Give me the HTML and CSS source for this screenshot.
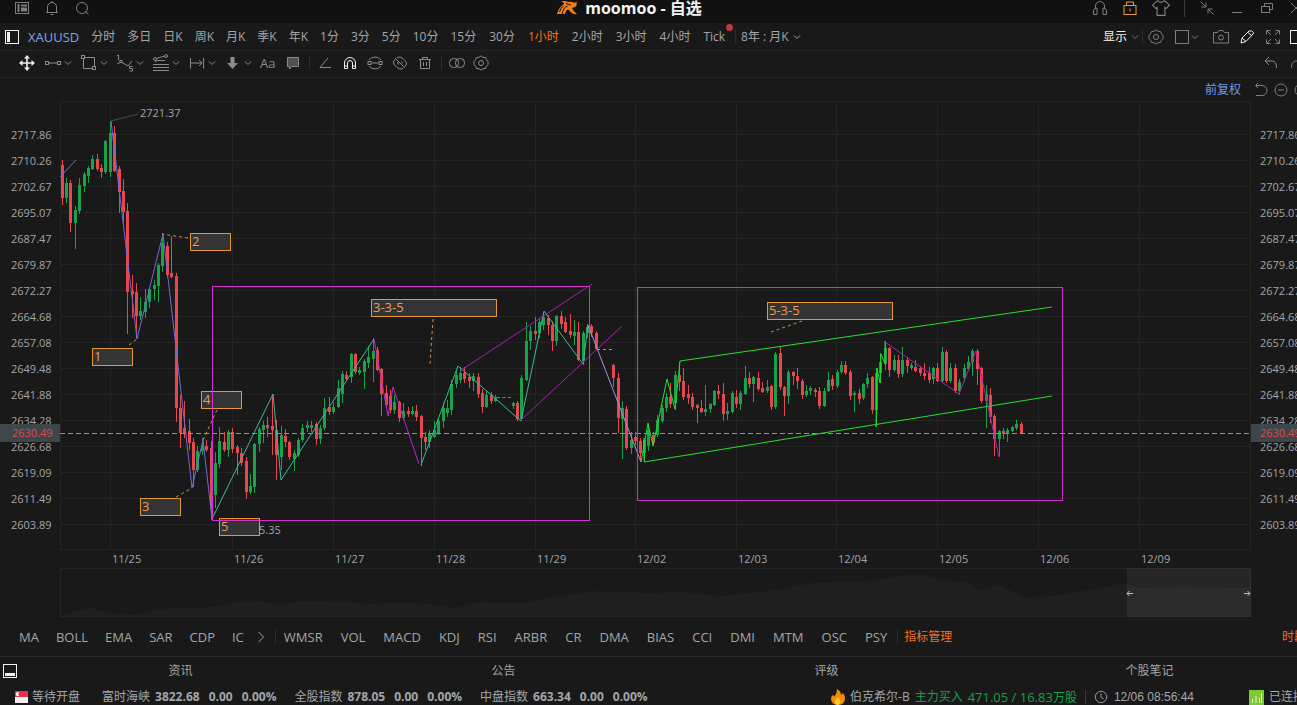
FILE: index.html
```html
<!DOCTYPE html>
<html lang="zh-CN">
<head>
<meta charset="utf-8">
<title>moomoo - 自选</title>
<link rel="stylesheet" href="styles.css">
</head>
<body>
<svg class="sprite" aria-hidden="true">
  <symbol id="chev" viewBox="0 0 8 8"><path d="M1 2.500l3 3 3-3"/></symbol>
  <symbol id="layout" viewBox="0 0 16 16"><rect x="1.500" y="2.500" width="13" height="11"/><path d="M4.500 4v8" stroke-width="2"/><path d="M7 5.500h6M7 8.500h6M7 10.500h6" stroke-width="2"/></symbol>
  <symbol id="bell" viewBox="0 0 16 16"><path d="M2 12.500h12M3.500 12V7a4.500 4.500 0 0 1 9 0v5M8 1v2M6.500 14.500h3"/></symbol>
  <symbol id="search" viewBox="0 0 16 16"><circle cx="8" cy="8" r="5.500"/><path d="M11.500 11.500l3 3"/></symbol>
  <symbol id="phones" viewBox="0 0 16 16"><path d="M3.500 8V6a4.500 4.500 0 0 1 9 0v2"/><path d="M1.500 14.500V11q0-3 3.500-3v6.500zM14.500 14.500V11q0-3-3.500-3v6.500z"/></symbol>
  <symbol id="lock" viewBox="0 0 16 16"><rect x="2" y="5.500" width="12" height="9"/><path d="M4.500 5V2h7v3M8 8.500v3"/></symbol>
  <symbol id="shirt" viewBox="0 0 16 16"><path d="M5 1.500q3 3 6 0l4.500 4-3 3-1-1v7h-7v-7l-1 1-3-3z"/></symbol>
  <symbol id="shrink" viewBox="0 0 16 16"><path d="M1.500 1.500l5 5M7 2.500v4.500H2.500M14.500 14.500l-5-5M9 13.500V9h4.500"/></symbol>
  <symbol id="mini" viewBox="0 0 16 16"><path d="M3 12.500h10"/></symbol>
  <symbol id="restore" viewBox="0 0 16 16"><path d="M5.500 6V3.500h8v6H11"/><rect x="2.500" y="6.500" width="8" height="6"/></symbol>
  <symbol id="close" viewBox="0 0 16 16"><path d="M2 3l10 10M12 3L2 13"/></symbol>
  <symbol id="side" viewBox="0 0 16 16"><rect x="1.500" y="1.500" width="13" height="13"/><path d="M4.500 3v10" stroke-width="3"/></symbol>
  <symbol id="dock" viewBox="0 0 16 16"><rect x="1.500" y="1.500" width="13" height="13"/><path d="M3 11.500h10" stroke-width="3"/></symbol>
  <symbol id="gear" viewBox="0 0 16 16"><path d="M8 .8l2 1.500 2.500.2 1 2.300L15 6.500v3l-1.500 1.700-1 2.300-2.500.2-2 1.500-2-1.500-2.500-.2-1-2.300L1 9.500v-3l1.500-1.700 1-2.300L6 2.300z"/><circle cx="8" cy="8" r="2.500"/></symbol>
  <symbol id="box" viewBox="0 0 16 16"><rect x="1.500" y="1.500" width="13" height="13"/></symbol>
  <symbol id="camera" viewBox="0 0 16 16"><path d="M.5 3.500h4l1.500-2h4l1.500 2h4v10.500H.5z"/><circle cx="8" cy="8.500" r="2.500"/></symbol>
  <symbol id="pen" viewBox="0 0 16 16"><path d="M2 14l1-5 7-7q3-1 4.500 1.500L14 5l-7 7.500zM3 9l4 3.500M9 3.500L13 7"/></symbol>
  <symbol id="expand" viewBox="0 0 16 16"><path d="M1.500 5.500v-4h4M2 2l4 4M14.500 5.500v-4h-4M14 2l-4 4M1.500 10.500v4h4M2 14l4-4M14.500 10.500v4h-4M14 14l-4-4"/></symbol>
  <symbol id="move" viewBox="0 0 18 18"><path d="M9 3v12M3 9h12" stroke-width="1.600"/><path d="M9 1l3 3.500H6zM9 17l3-3.500H6zM1 9l3.500-3v6zM17 9l-3.500-3v6z" fill="currentColor" stroke="none"/></symbol>
  <symbol id="line" viewBox="0 0 18 18"><rect x="1.500" y="7.500" width="3" height="3"/><rect x="13.500" y="7.500" width="3" height="3"/><path d="M5 9h8"/></symbol>
  <symbol id="shape" viewBox="0 0 18 18"><path d="M5 3.500h9.500V13M12 14.500H3.500V5"/><rect x="1.500" y="1.500" width="3" height="3"/><rect x="12.500" y="12.500" width="3" height="3"/></symbol>
  <symbol id="wave" viewBox="0 0 18 18"><path d="M1 2l1.500-1v5M1 10l4-2 7 4 4-5"/><rect x="4" y="6.500" width="2" height="2"/><path d="M16.500 12.500h-3v2h3v2.500h-3" /></symbol>
  <symbol id="fib" viewBox="0 0 18 18"><path d="M1 10.500h16M1 13.500h16M1 16.500h16M3 8l2-1.500h8M4.500 4.500L12.500 2"/><circle cx="3" cy="5" r="1.500"/><circle cx="14" cy="2" r="1.500"/></symbol>
  <symbol id="range" viewBox="0 0 18 18"><path d="M2.500 4v10.500M15.500 4v10.500M3 9h11M11 6l3 3-3 3"/></symbol>
  <symbol id="down" viewBox="0 0 18 18"><path d="M6.500 3h4v6h3.500l-5.500 6L3 9h3.500z" fill="currentColor" stroke="none"/></symbol>
  <symbol id="note" viewBox="0 0 18 18"><path d="M3.500 3.500h11v9H8l-2.500 2.500v-2.500h-2z" fill="#505050"/></symbol>
  <symbol id="angle" viewBox="0 0 18 18"><path d="M12 4L4 13.500h11"/></symbol>
  <symbol id="magnet" viewBox="0 0 18 18"><path d="M3.500 14.500V9a5.500 5.500 0 0 1 11 0v5.500h-3V9a2.500 2.500 0 0 0-5 0v5.500zM3.500 12h3M11.500 12h3"/></symbol>
  <symbol id="sync" viewBox="0 0 18 18"><path d="M3 6a7 6 0 0 1 12 0M3 12a7 6 0 0 0 12 0M6 9h6"/><rect x="2" y="7.500" width="3" height="3"/><rect x="13" y="7.500" width="3" height="3"/></symbol>
  <symbol id="hide" viewBox="0 0 18 18"><path d="M4 4l10 10M6 3.500Q9 2 12 4.500T15.500 9q0 2-1.500 3.500M12 14.500Q9 16 6 13.500T2.500 9q0-2 1.500-3.500M7.500 10.500a2 2 0 0 1 0-3M10.500 7.500a2 2 0 0 1 .5 2"/></symbol>
  <symbol id="trash" viewBox="0 0 18 18"><path d="M3 5.500h12M6.500 5V3.500h5V5M4.500 6v8.500h9V6M7.500 8v4M10.500 8v4"/></symbol>
  <symbol id="rings" viewBox="0 0 18 18"><rect x="1.500" y="4.500" width="9" height="9" rx="4"/><rect x="7.500" y="4.500" width="9" height="9" rx="4"/></symbol>
  <symbol id="undo" viewBox="0 0 16 16"><path d="M6 2L2 6l4 4M2.500 6H9q4.500 0 4.500 7"/></symbol>
  <symbol id="redo" viewBox="0 0 16 16"><path d="M2.500 13q0-7 4.500-7h7"/></symbol>
  <symbol id="back" viewBox="0 0 16 16"><path d="M5 1L2.500 3.500 5 6M3 3.500h6a5 5 0 0 1 0 10H3"/></symbol>
  <symbol id="minus" viewBox="0 0 16 16"><circle cx="8" cy="8" r="6"/><path d="M5 8h6"/></symbol>
  <symbol id="more" viewBox="0 0 8 14"><path d="M1.500 2l5 5-5 5"/></symbol>
  <symbol id="clock" viewBox="0 0 16 16"><circle cx="8" cy="8" r="6.500"/><path d="M8 4v4.500l3 1.500"/></symbol>
</svg>

<header class="titlebar">
  <div class="tools">
    <button aria-label="布局"><svg class="i16"><use href="#layout"/></svg></button>
    <button aria-label="通知"><svg class="i16"><use href="#bell"/></svg></button>
    <button aria-label="搜索"><svg class="i16"><use href="#search"/></svg></button>
  </div>
  <h1 class="brand">
    <svg class="logo" viewBox="0 0 20 14" aria-hidden="true"><path d="M0 13Q2 6 7 3q0-2-3-2.500Q8-1 11 1q5-1 6 1 2 0 2-2 2 4-1 6l-3 1q1 3 5 6-5 1-8-4-2-1-3 1l-1 3z" fill="#f57c12"/><path d="M5.500 13q0-6 5-8M9 2.500l5 1.500M2.500 11q1-4 4-6" stroke="#111" stroke-width="1" fill="none"/></svg>
    moomoo - 自选
  </h1>
  <div class="window-tools">
    <button aria-label="客服"><svg class="i16"><use href="#phones"/></svg></button>
    <button aria-label="锁定" class="amber"><svg class="i16"><use href="#lock"/></svg></button>
    <button aria-label="主题"><svg class="i18"><use href="#shirt"/></svg></button>
    <span class="sep"></span>
    <button aria-label="收缩"><svg class="i16"><use href="#shrink"/></svg></button>
    <button aria-label="最小化"><svg class="i16"><use href="#mini"/></svg></button>
    <button aria-label="还原"><svg class="i16"><use href="#restore"/></svg></button>
    <button aria-label="关闭" class="cut"><svg class="i16"><use href="#close"/></svg></button>
  </div>
</header>

<nav class="periods">
  <button aria-label="侧栏" class="white"><svg class="i16"><use href="#side"/></svg></button>
  <button class="symbol">XAUUSD</button>
  <div class="period-list">
    <button>分时</button><button>多日</button><button>日K</button><button>周K</button><button>月K</button><button>季K</button><button>年K</button><button>1分</button><button>3分</button><button>5分</button><button>10分</button><button>15分</button><button>30分</button><button class="on">1小时</button><button>2小时</button><button>3小时</button><button>4小时</button><button class="tick">Tick</button>
  </div>
  <span class="sep"></span>
  <button class="drop">8年 : 月K<svg class="i8"><use href="#chev"/></svg></button>
  <div class="right">
    <button class="drop white">显示<svg class="i8 dim"><use href="#chev"/></svg></button>
    <span class="sep"></span>
    <button aria-label="设置"><svg class="i16"><use href="#gear"/></svg></button>
    <button class="drop tight" aria-label="窗格"><svg class="i16"><use href="#box"/></svg><svg class="i8"><use href="#chev"/></svg></button>
    <button aria-label="截图"><svg class="i16"><use href="#camera"/></svg></button>
    <button aria-label="画线" class="white"><svg class="i16"><use href="#pen"/></svg></button>
    <button aria-label="全屏"><svg class="i16"><use href="#expand"/></svg></button>
    <button aria-label="右栏" class="cut white"><svg class="i16"><use href="#box"/></svg></button>
  </div>
</nav>

<div class="drawbar">
  <div class="group">
    <button aria-label="移动" class="white"><svg class="i18"><use href="#move"/></svg></button>
    <button class="split" aria-label="线段"><svg class="i18"><use href="#line"/></svg><svg class="i8"><use href="#chev"/></svg></button>
    <button class="split" aria-label="图形"><svg class="i18"><use href="#shape"/></svg><svg class="i8"><use href="#chev"/></svg></button>
    <button class="split" aria-label="波浪"><svg class="i18"><use href="#wave"/></svg><svg class="i8"><use href="#chev"/></svg></button>
    <button class="split" aria-label="斐波那契"><svg class="i18"><use href="#fib"/></svg><svg class="i8"><use href="#chev"/></svg></button>
    <button class="split" aria-label="区间"><svg class="i18"><use href="#range"/></svg><svg class="i8"><use href="#chev"/></svg></button>
    <button class="split" aria-label="箭头"><svg class="i18"><use href="#down"/></svg><svg class="i8"><use href="#chev"/></svg></button>
    <button class="aa">Aa</button>
    <button aria-label="注释"><svg class="i18"><use href="#note"/></svg></button>
  </div>
  <span class="sep"></span>
  <div class="group">
    <button aria-label="角度"><svg class="i18"><use href="#angle"/></svg></button>
    <button aria-label="磁铁" class="white"><svg class="i18"><use href="#magnet"/></svg></button>
    <button aria-label="同步"><svg class="i18"><use href="#sync"/></svg></button>
    <button aria-label="隐藏"><svg class="i18"><use href="#hide"/></svg></button>
    <button aria-label="删除"><svg class="i18"><use href="#trash"/></svg></button>
  </div>
  <span class="sep"></span>
  <div class="group">
    <button aria-label="对比"><svg class="i18"><use href="#rings"/></svg></button>
    <button aria-label="画线设置"><svg class="i16"><use href="#gear"/></svg></button>
  </div>
  <div class="history">
    <button aria-label="撤销"><svg class="i16"><use href="#undo"/></svg></button>
    <button aria-label="重做" class="cut dim"><svg class="i16"><use href="#redo"/></svg></button>
  </div>
</div>

<main>
  <div class="chart-head">
    <a href="#chart">前复权</a>
    <button aria-label="复位"><svg class="i16"><use href="#back"/></svg></button>
    <button aria-label="缩小"><svg class="i16"><use href="#minus"/></svg></button>
    <button aria-label="放大" class="cut"><svg class="i16"><use href="#minus"/></svg></button>
  </div>
  <section class="chart" id="chart">
    <div class="axis"></div>
    <svg class="plot" role="img" aria-label="XAUUSD 1小时 K线图"></svg>
    <div class="axis axis-right"></div>
  </section>
  <svg class="overview" role="img" aria-label="区间选择"></svg>
</main>

<nav class="indicators">
  <div class="main-set">
    <button>MA</button><button>BOLL</button><button>EMA</button><button>SAR</button><button>CDP</button><button>IC</button>
  </div>
  <button aria-label="更多"><svg class="arrow"><use href="#more"/></svg></button>
  <span class="sep"></span>
  <div class="sub-set">
    <button>WMSR</button><button>VOL</button><button>MACD</button><button>KDJ</button><button>RSI</button><button>ARBR</button><button>CR</button><button>DMA</button><button>BIAS</button><button>CCI</button><button>DMI</button><button>MTM</button><button>OSC</button><button>PSY</button>
  </div>
  <span class="sep"></span>
  <button class="manage">指标管理</button>
  <button class="zone">时段</button>
</nav>

<nav class="tabs">
  <button aria-label="底栏" class="white"><svg class="i16"><use href="#dock"/></svg></button>
  <div class="tab-list"><button>资讯</button><button>公告</button><button>评级</button><button>个股笔记</button></div>
</nav>

<footer class="status">
  <span class="market"><svg class="flag" viewBox="0 0 13 12" aria-hidden="true"><path d="M0 0h13v6H0z" fill="#e8304a"/><path d="M0 6h13v6H0z" fill="#f4f0f0"/><path d="M4 1.500a2 2 0 1 0 0 3.200 2.400 2.400 0 0 1 0-3.200z" fill="#fff"/></svg>等待开盘</span>
  <span class="quote">富时海峡 <b>3822.68</b><b>0.00</b><b>0.00%</b></span>
  <span class="quote">全股指数 <b>878.05</b><b>0.00</b><b>0.00%</b></span>
  <span class="quote">中盘指数 <b>663.34</b><b>0.00</b><b>0.00%</b></span>
  <span class="feed">
    <svg class="flame" viewBox="0 0 14 16" aria-hidden="true"><path d="M6 0q4 2 4 6l2-2q3 4 1.500 8T7 16 .5 12 2 6l1.500 1.500Q6 4 6 0z" fill="#f58a0b"/><path d="M7 8q3 3 2.500 5T7 16q-3-.5-3-3t3-5z" fill="#ffc928"/></svg>
    <span>伯克希尔-B</span>
    <span class="buy">主力买入</span>
    <span class="buy amount">471.05 / 16.83<small>万股</small></span>
  </span>
  <span class="sep"></span>
  <span class="time"><svg class="i14"><use href="#clock"/></svg><time>12/06 08:56:44</time></span>
  <span class="link"><svg class="signal" viewBox="0 0 15 15" aria-hidden="true"><path d="M0 0h15v15H0z" fill="#7ec832"/><path d="M3.500 9v4M7 6v7M10.500 8v5M12.500 3v10" stroke="#e8ffd0"/></svg>已连接</span>
</footer>
<script src="chart.js"></script>
</body>
</html>
```

FILE: styles.css
```css
* { box-sizing: border-box; }
body {
  margin: 0;
  min-height: 100vh;
  overflow: hidden;
  background: #191919;
  color: #a3a6aa;
  font: 12px/16px "Open Sans", "Noto Sans CJK SC", sans-serif;
}
button {
  display: flex;
  align-items: center;
  flex: none;
  padding: 0;
  border: 0;
  background: none;
  color: inherit;
  font: inherit;
  white-space: nowrap;
}
svg { display: block; flex: none; fill: none; stroke: currentColor; }
.sprite { position: absolute; width: 0; height: 0; }
.i8 { width: 8px; height: 8px; }
.i14 { width: 14px; height: 14px; }
.i16 { width: 16px; height: 16px; }
.i18 { width: 18px; height: 18px; }
.logo, .flag, .flame, .signal { stroke: none; }
.white { color: #f0f0f0; }
.amber { color: #f09a35; }
.dim { color: #777; }
.cut { width: 8px; overflow: hidden; }
.sep { flex: none; width: 1px; height: 14px; background: #2d2d2d; }

.titlebar {
  display: grid;
  grid-template-columns: 1fr auto 1fr;
  align-items: center;
  align-content: center;
  height: 23px;
  padding: 0 52px 8px 14px;
  background: #111;
  color: #7d7f82;
}
.tools { display: flex; gap: 14px; }
.brand {
  display: flex;
  align-items: center;
  gap: 8px;
  margin: 0;
  color: #f4f4f4;
  font-size: 16px;
  line-height: 14px;
  white-space: nowrap;
}
.logo { width: 20px; height: 14px; }
.window-tools {
  display: flex;
  align-items: center;
  justify-self: end;
  gap: 14px;
  margin-right: -52px;
}
.window-tools .sep { background: #3a3a3a; height: 18px; }

.periods {
  display: flex;
  align-items: center;
  height: 28px;
  padding-left: 4px;
  border-bottom: 1px solid #262626;
}
.symbol { margin: 0 12px 0 8px; color: #7ba5ea; font-size: 13px; }
.period-list { display: flex; gap: 12px; margin-right: 9px; }
.period-list button:nth-child(n+12) { padding-right: 1px; }
.period-list .on { color: #f5701e; }
.tick { position: relative; }
.tick::after {
  content: "";
  position: absolute;
  top: -5px;
  right: -7px;
  width: 7px;
  height: 7px;
  border-radius: 50%;
  background: #b83a42;
}
.drop { gap: 4px; margin-left: 5px; }
.right { display: flex; align-items: center; gap: 10px; margin-left: auto; color: #7d7f82; }
.right .drop { margin-left: 0; }
.right .sep { margin: 0 -5px 0 -7px; }
.right .tight { gap: 1px; margin-right: 4px; }
.right .cut { margin-left: -2px; }

.drawbar {
  display: flex;
  align-items: center;
  height: 27px;
  padding: 0 0 2px 18px;
  border-bottom: 1px solid #262626;
  color: #8a8c8f;
}
.group { display: flex; align-items: center; gap: 8px; }
.sep + .group { gap: 7px; margin-left: 6px; }
.group + .sep { margin-left: 7px; }
.split { gap: 2px; }
.aa { width: 16px; font-size: 13px; }
.history { display: flex; gap: 10px; margin-left: auto; }

.chart-head {
  display: flex;
  align-items: center;
  justify-content: flex-end;
  gap: 4px;
  height: 23px;
  color: #7d7f82;
}
.chart-head a { margin-right: 8px; color: #6d9be8; text-decoration: none; }
.chart-head .cut { width: 4px; }
.chart { display: grid; grid-template-columns: 60px 1fr 46px; }
.axis {
  position: relative;
  overflow: hidden;
  padding: 21px 0 0 11px;
  font-size: 11px;
  line-height: 26px;
}
.axis span { display: block; }
.axis .last {
  position: absolute;
  top: 323px;
  left: 0;
  width: 60px;
  padding-left: 12px;
  background: #3c464b;
  color: #e5484d;
  line-height: 18px;
}
.axis-right, .axis-right .last { padding-left: 9px; }
.plot { width: 100%; height: 467px; }
.plot text { fill: #a3a6aa; stroke: none; font-size: 11px; }
.plot .grid { stroke: #242424; }
.plot .up { stroke: #1aa24b; }
.plot .down { stroke: #e5484d; }
.plot .body { stroke-width: 3; }
.plot .blue { stroke: #7569d8; }
.plot .violet { stroke: #b32ad0; }
.plot .teal { stroke: #35bd98; }
.plot .plum { stroke: #a81fb4; }
.plot .lilac { stroke: #b28ae0; }
.plot .green { stroke: #22e02c; }
.plot .frame { stroke: #d42ed0; }
.plot .price { stroke: #e87a24; stroke-dasharray: 5 3; }
.plot .leader { stroke: #dc8c3c; stroke-dasharray: 3 3; }
.plot .flat { stroke: #508a3a; stroke-dasharray: 4 2; }
.plot .peak { stroke: #4a4a4a; }
.plot .callout { fill: #343434; stroke: #e5982f; }
.plot .label { fill: #ee9c55; font-size: 13px; }
.overview { width: calc(100% - 106px); height: 49px; margin-left: 60px; }
.overview .area { fill: #1f1f1f; stroke: none; }
.overview .view { fill: #fff; fill-opacity: .06; stroke: none; }
.overview .edge { stroke: #252525; }
.overview .grip { stroke: #c0c0c0; }

.indicators {
  display: flex;
  align-items: center;
  gap: 10px;
  height: 40px;
  padding-left: 19px;
  border-bottom: 1px solid #2a2a2a;
  font-size: 13px;
}
.main-set { display: flex; gap: 17px; margin-right: 3px; }
.sub-set { display: flex; gap: 18px; margin-left: -2px; }
.arrow { width: 8px; height: 14px; }
.sub-set + .sep { margin-right: -4px; }
.manage, .zone { color: #f5701e; font-size: 12px; }
.zone { width: 15px; margin-left: auto; overflow: hidden; }

.tabs { display: flex; align-items: center; height: 27px; padding-left: 2px; }
.tab-list { display: grid; grid-template-columns: repeat(4, 1fr); flex: 1; margin: 0 -14px 0 1px; }
.tab-list button { justify-content: center; }

.status { display: flex; align-items: center; height: 26px; padding-left: 15px; white-space: nowrap; }
.market { display: flex; align-items: center; gap: 4px; margin-right: 22px; }
.flag { width: 13px; height: 12px; }
.quote { display: flex; gap: 9px; margin-right: 18px; }
.quote b { font-weight: 700; }
.quote b:first-of-type { margin-left: -4px; }
.feed { display: flex; align-items: center; gap: 5px; margin-left: auto; }
.flame { width: 14px; height: 16px; }
.buy { color: #18a04a; }
.amount { font-size: 13px; }
.amount small { font-size: 12px; }
.status .sep { margin: 0 8px; background: #3a3a3a; }
.time { display: flex; align-items: center; gap: 6px; font-family: "Liberation Sans", sans-serif; }
.link { display: flex; align-items: center; gap: 5px; width: 48px; margin-left: 55px; overflow: hidden; }
.signal { width: 15px; height: 15px; }
```

FILE: chart.js
```js
// Candles: x, high, body top, body bottom, low, direction (u = up, d = down).
const candles = `
62 160 165 198 205 d|66 178 183 198 203 u|70 180 183 223 232 d|75 206 210 223 249 u|79 178 185 211 214 u
84 172 174 186 192 u|88 166 168 176 183 u|92 155 159 169 170 u|97 154 159 169 171 d|101 164 168 172 178 d
105 140 141 172 174 u|110 121 133 172 177 u|114 126 133 171 172 d|119 166 169 192 213 d|123 179 191 212 223 d
127 203 211 292 334 d|132 275 291 294 318 d|136 283 292 316 338 d|140 297 311 316 320 u|145 289 302 312 318 u
149 287 289 302 308 u|154 280 285 289 300 u|158 263 265 286 302 u|162 233 243 266 272 u|167 242 246 275 278 d
171 236 273 277 278 d|176 273 276 408 422 d|180 395 408 433 448 d|184 401 428 434 438 d|189 419 431 443 450 d
193 438 442 470 487 d|197 446 451 470 472 u|202 438 447 451 455 u|206 440 446 450 452 d|211 441 448 508 520 d
215 452 463 495 508 u|219 427 441 464 468 u|224 432 442 450 452 d|228 430 432 450 457 u|232 428 432 449 453 d
237 445 447 453 475 d|241 448 453 463 466 d|246 457 461 492 499 d|250 474 486 492 494 u|254 443 444 487 493 u
259 427 429 444 452 u|263 421 425 430 443 u|267 417 425 428 437 d|272 394 426 430 455 d|276 420 430 455 480 d
281 426 435 457 470 u|285 429 436 442 447 d|289 441 442 457 460 d|294 450 453 459 471 u|298 438 440 455 457 u
302 424 428 440 442 u|307 421 425 428 432 u|311 421 425 428 432 u|316 422 424 439 445 d|320 425 428 439 444 u
324 398 408 428 430 u|329 397 407 412 415 d|333 402 407 412 414 u|338 380 388 407 408 u|342 371 374 394 403 u
346 371 375 379 380 d|351 353 354 377 383 u|355 353 354 372 374 d|359 367 370 373 375 u|364 359 361 372 389 u
368 346 357 363 368 u|373 338 351 359 382 u|377 347 350 370 371 d|381 368 369 394 416 d|386 385 393 405 408 d
390 390 396 410 413 d|394 395 402 410 414 u|399 401 402 418 422 d|403 403 411 418 420 u|408 407 411 414 417 d
412 406 411 414 415 u|416 405 411 417 421 d|421 415 416 438 466 d|425 432 437 442 450 d|429 430 433 442 448 u
434 421 430 437 438 u|438 419 421 433 435 u|443 403 408 421 428 u|447 400 408 413 417 u|451 380 384 410 415 u
456 370 375 384 388 u|460 367 373 380 383 u|464 367 373 379 383 d|469 373 377 381 388 d|473 373 376 381 391 u
478 373 377 394 398 d|482 389 393 407 413 d|486 391 395 407 408 u|491 392 395 401 404 d|495 395 398 401 402 u
513 402 403 406 409 u|517 401 403 419 421 d|521 375 378 419 420 u|526 322 341 380 381 u|530 326 331 341 350 u
535 317 331 334 340 d|539 318 322 333 338 u|543 312 317 325 330 u|548 315 318 325 335 d|552 321 325 341 351 d
556 315 316 341 346 u|561 311 316 324 329 d|565 317 322 332 333 d|570 314 331 335 338 d|574 320 332 336 345 u
578 322 332 360 361 d|583 331 333 361 365 u|587 324 327 333 338 u|591 324 326 333 337 d|596 331 333 349 350 d
613 364 365 378 387 d|618 373 378 418 433 d|622 401 408 419 459 u|626 406 409 448 450 d|631 432 440 448 454 u
635 432 437 441 445 d|640 438 441 453 462 d|644 438 440 453 461 u|648 424 430 446 451 u|653 432 435 443 446 d
657 415 420 435 437 u|662 405 408 421 423 u|666 393 397 408 412 u|670 383 397 404 408 d|675 371 375 403 410 u
679 362 375 382 391 d|683 368 381 397 400 d|688 385 394 398 404 d|692 393 397 407 410 d|697 404 405 408 423 d
701 400 408 412 413 d|705 385 409 412 416 u|710 403 404 409 413 u|714 390 391 405 406 u|718 385 391 394 399 d
723 383 394 414 421 d|727 403 411 414 420 u|732 391 393 412 413 u|736 390 397 404 408 d|740 391 393 404 410 u
745 366 378 394 395 u|749 372 378 384 388 d|753 376 377 384 402 u|758 372 378 389 391 d|762 382 388 392 393 d
767 380 387 391 393 u|771 385 386 407 410 d|775 352 354 407 409 u|780 347 353 387 390 d|784 386 387 396 416 d
788 370 372 396 404 u|793 371 372 376 385 d|797 368 376 381 389 d|802 379 381 395 399 d|806 385 391 395 397 u
810 386 388 391 395 u|815 388 390 392 397 d|819 387 391 406 409 d|824 388 391 406 407 u|828 372 380 391 392 u
832 375 379 386 390 d|837 370 372 386 388 u|841 361 365 372 374 u|845 361 365 373 375 d|850 370 372 396 400 d
854 391 393 395 412 u|859 389 393 399 404 d|863 383 384 398 400 u|867 373 378 384 388 u|872 376 377 410 414 d
876 368 373 410 427 u|880 353 362 373 383 u|885 341 348 364 370 u|889 347 348 370 377 d|894 355 360 370 372 u
898 355 360 374 378 d|902 347 360 374 377 u|907 357 360 366 373 d|911 363 365 368 370 u|915 360 367 371 372 d
920 366 368 373 376 d|924 363 373 376 380 d|929 367 373 380 383 d|933 367 368 379 384 u|937 363 368 381 382 d
942 347 352 381 382 u|946 350 352 381 383 d|950 363 368 381 383 u|955 364 368 391 393 d|959 379 382 391 395 u
964 364 368 378 382 u|968 356 362 369 370 u|972 349 351 362 376 u|977 349 351 369 385 d|981 367 368 401 403 d
986 385 394 401 428 u|990 388 395 417 423 d|994 414 416 439 456 d|999 430 431 439 457 u|1003 428 431 434 439 d
1007 428 430 433 442 u|1012 426 427 431 432 u|1016 420 424 428 430 u|1021 422 424 433 434 d`
  .trim().split(/[|\n]/).map(row => row.split(' '));

// Drawn lines: style, then x,y points.
const lines = [
  ['peak', '111,121 138,114'],
  ['blue', '60,177 76,160'],
  ['blue', '111,121 137,339 163,234 192,488 203,440 212,519'],
  ['teal', '212,519 273,394 281,480 374,339'],
  ['violet', '374,339 388,416 393,387 419,464'],
  ['teal', '421,465 458,366 521,421 544,311 583,364 588,325'],
  ['lilac', '588,325 641,462'],
  ['plum', '460,371 592,284'],
  ['plum', '521,420 622,326'],
  ['green', '641,462 648,423 653,446 667,379 675,409 680,361 1052,307'],
  ['green', '644,438 644,462 1052,396'],
  ['green', '876,427 877,368 880,383 881,354 885,364 885,341'],
  ['plum', '885,342 959,394 976,351 999,457'],
  ['price', '60,433.5 1251,433.5'],
  ['leader', '188,238 162,234'],
  ['leader', '129,345 137,339'],
  ['leader', '217,410 203,440'],
  ['leader', '176,497 192,488'],
  ['leader', '433,319 430,364'],
  ['leader', '802,321 771,332'],
  ['flat', '496,397.5 511,397.5'],
  ['leader', '597,349.5 612,349.5']
];
const frames = [[212.5, 286.5, 377, 234], [637.5, 287.5, 425, 213]];
const callouts = [
  [92, 348, 41, '1'], [190, 233, 41, '2'], [140, 498, 41, '3'], [201, 391, 41, '4'],
  [219, 518, 41, '5'], [371, 299, 126, '3-3-5'], [767, 302, 126, '5-3-5']
];
const days = [[111, '11/25'], [233, '11/26'], [334, '11/27'], [435, '11/28'], [536, '11/29'], [636, '12/02'],
  [737, '12/03'], [837, '12/04'], [938, '12/05'], [1039, '12/06'], [1140, '12/09']];
const prices = ['2717.86', '2710.26', '2702.67', '2695.07', '2687.47', '2679.87', '2672.27', '2664.68',
  '2657.08', '2649.48', '2641.88', '2634.28', '2626.68', '2619.09', '2611.49', '2603.89'];
const history = '60,616 75,611 93,607 100,611 112,613 130,615 150,611 175,607 200,608 220,606 235,602 260,601 280,604 300,601 325,601 350,602 375,604 400,602 430,604 456,608 476,602 526,603 549,597 596,591 650,593 685,592 720,596 770,591 812,583 859,582 900,576 921,574 936,579 967,582 979,591 998,585 1025,597 1050,596 1090,590 1123,583 1140,588 1180,587 1251,588';

const LEFT = 60, TOP = 101, SPAN = 1191;
const plot = document.querySelector('.plot');
const overview = document.querySelector('.overview');

document.querySelectorAll('.axis').forEach(axis => {
  axis.innerHTML = prices.map(p => `<span>${p}</span>`).join('') + '<span class="last">2630.49</span>';
});

function draw() {
  const k = plot.getBoundingClientRect().width / SPAN;
  const X = x => (x - LEFT) * k;
  const pts = (list, top) => list.split(' ').map(p => {
    const [x, y] = p.split(',').map(Number);
    return `${X(x)},${y - top}`;
  }).join(' ');
  let out = '';
  const seg = (cls, x1, y1, x2, y2) => { out += `<line class="${cls}" x1="${x1}" y1="${y1}" x2="${x2}" y2="${y2}"/>`; };

  out += `<rect class="grid" x="0.5" y="0.5" width="${X(1250)}" height="448"/>`;
  prices.forEach((_, i) => seg('grid', 0, 33.5 + i * 26, X(1251), 33.5 + i * 26));
  days.forEach(([x, name]) => {
    seg('grid', X(x) - 0.5, 0, X(x) - 0.5, 448);
    out += `<text x="${X(x) + 1}" y="462">${name}</text>`;
  });
  candles.forEach(([x, high, top, bottom, low, dir]) => {
    const cls = dir === 'u' ? 'up' : 'down';
    const cx = X(+x) + 0.5;
    seg(cls, cx, high - TOP, cx, low - TOP);
    seg(cls + ' body', cx, top - TOP, cx, bottom - TOP);
  });
  out += `<text x="${X(140)}" y="16">2721.37</text><text x="${X(259)}" y="433">5.35</text>`;
  callouts.forEach(([x, y, w]) => {
    out += `<rect class="callout" x="${X(x) + 0.5}" y="${y - TOP + 0.5}" width="${w - 1}" height="17"/>`;
  });
  lines.forEach(([cls, list]) => { out += `<polyline class="${cls}" points="${pts(list, TOP)}"/>`; });
  frames.forEach(([x, y, w, h]) => {
    out += `<rect class="frame" x="${X(x)}" y="${y - TOP}" width="${w * k}" height="${h}"/>`;
  });
  callouts.forEach(([x, y, , label]) => {
    out += `<text class="label" x="${X(x) + 2}" y="${y - TOP + 13}">${label}</text>`;
  });
  plot.innerHTML = out;

  const a = X(1127), b = X(1251);
  overview.innerHTML = `
    <polygon class="area" points="${pts(history, 568)} ${b},49 0,49"/>
    <rect class="edge" x="0.5" y="0.5" width="${b - 1}" height="48"/>
    <rect class="view" x="${a}" y="0" width="${b - a}" height="49"/>
    <path class="grip" d="M${a + 6} 25.500h-6m2.500-2.500l-2.500 2.500 2.500 2.500M${b - 7} 25.500h6m-2.500-2.500l2.500 2.500-2.500 2.500"/>`;
}
draw();
window.addEventListener('resize', draw);
```
